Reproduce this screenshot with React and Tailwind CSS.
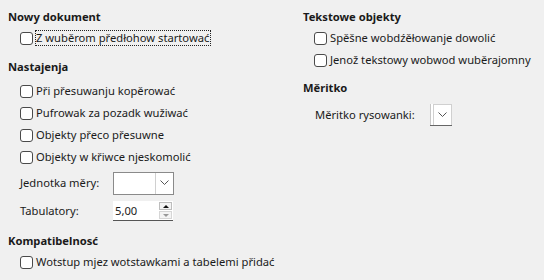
import React from 'react';

// ── Small widgets ──────────────────────────────────────────────────────────

function Check({ label, focus }) {
  return (
    <label className="flex items-center gap-[3px] h-[22px] whitespace-nowrap">
      <span className="w-[13px] h-[13px] rounded-[3px] border border-[#4a4a4a] bg-white flex-shrink-0" />
      <span className={focus ? 'outline outline-1 outline-dotted outline-[#222] leading-[14px] pr-[1px]' : ''}>{label}</span>
    </label>
  );
}

function Chevron() {
  return (
    <svg width="9" height="6" viewBox="0 0 9 6" className="text-[#555]">
      <path d="M0.5 0.5 L4.5 4.5 L8.5 0.5" fill="none" stroke="currentColor" strokeWidth="1" />
    </svg>
  );
}

function Heading({ children }) {
  return <h3 className="font-bold text-[#1a1a1a] h-[20px] flex items-center whitespace-nowrap">{children}</h3>;
}

// ── Page ───────────────────────────────────────────────────────────────────

export default function App() {
  return (
    <div
      className="w-[544px] h-[280px] bg-[#f0f0f0] text-[11.2px] text-[#1a1a1a] flex"
      style={{ fontFamily: '"Noto Sans", sans-serif' }}
    >
      {/* Left column */}
      <div className="w-[294px] pl-[8px] pt-[7px]">
        <Heading>Nowy dokument</Heading>
        <div className="pl-[12px]">
          <Check label="Z wuběrom předłohow startować" focus />
        </div>

        <div className="mt-[8px]">
          <Heading>Nastajenja</Heading>
        </div>
        <div className="pl-[12px] mt-[3px]">
          <Check label="Při přesuwanju kopěrować" />
          <Check label="Pufrowak za pozadk wužiwać" />
          <Check label="Objekty přeco přesuwne" />
          <Check label="Objekty w křiwce njeskomolić" />

          <div className="flex items-center h-[28px] mt-[1px]">
            <span className="w-[93px]">Jednotka měry:</span>
            <div className="flex h-[23px] w-[61px] bg-white border border-[#8a8a8a]">
              <div className="flex-1" />
              <div className="w-[18px] border-l border-[#d0d0d0] flex items-center justify-center">
                <Chevron />
              </div>
            </div>
          </div>

          <div className="flex items-center h-[28px]">
            <span className="w-[93px]">Tabulatory:</span>
            <div className="flex h-[20px] w-[60px] bg-white border-b border-[#555]">
              <span className="flex-1 pl-[2px] leading-[19px]">5,00</span>
              <div className="w-[14px] flex flex-col justify-center gap-[1px] pr-[1px]">
                <div className="h-[8px] border border-[#bdbdbd] bg-[#f4f4f4] flex items-center justify-center">
                  <span className="w-0 h-0 border-l-[3px] border-r-[3px] border-b-[3px] border-l-transparent border-r-transparent border-b-[#111]" />
                </div>
                <div className="h-[8px] border border-[#d6d6d6] bg-[#f4f4f4] flex items-center justify-center">
                  <span className="w-0 h-0 border-l-[3px] border-r-[3px] border-t-[3px] border-l-transparent border-r-transparent border-t-[#999]" />
                </div>
              </div>
            </div>
          </div>
        </div>

        <div className="mt-[6px]">
          <Heading>Kompatibelnosć</Heading>
        </div>
        <div className="pl-[12px]">
          <Check label="Wotstup mjez wotstawkami a tabelemi přidać" />
        </div>
      </div>

      {/* Right column */}
      <div className="flex-1 pl-[9px] pt-[7px]">
        <Heading>Tekstowe objekty</Heading>
        <div className="pl-[11px]">
          <Check label="Spěšne wobdźěłowanje dowolić" />
          <Check label="Jenož tekstowy wobwod wuběrajomny" />
        </div>

        <div className="mt-[7px]">
          <Heading>Měritko</Heading>
        </div>
        <div className="pl-[12px] flex items-center h-[28px] mt-[3px]">
          <span className="w-[115px]">Měritko rysowanki:</span>
          <div className="flex h-[22px] w-[22px] bg-white border-b border-[#666]">
            <div className="w-[3px] border-l border-[#c8c8c8]" />
            <div className="flex-1 border border-b-0 border-[#d0d0d0] flex items-center justify-center">
              <Chevron />
            </div>
          </div>
        </div>
      </div>
    </div>
  );
}
